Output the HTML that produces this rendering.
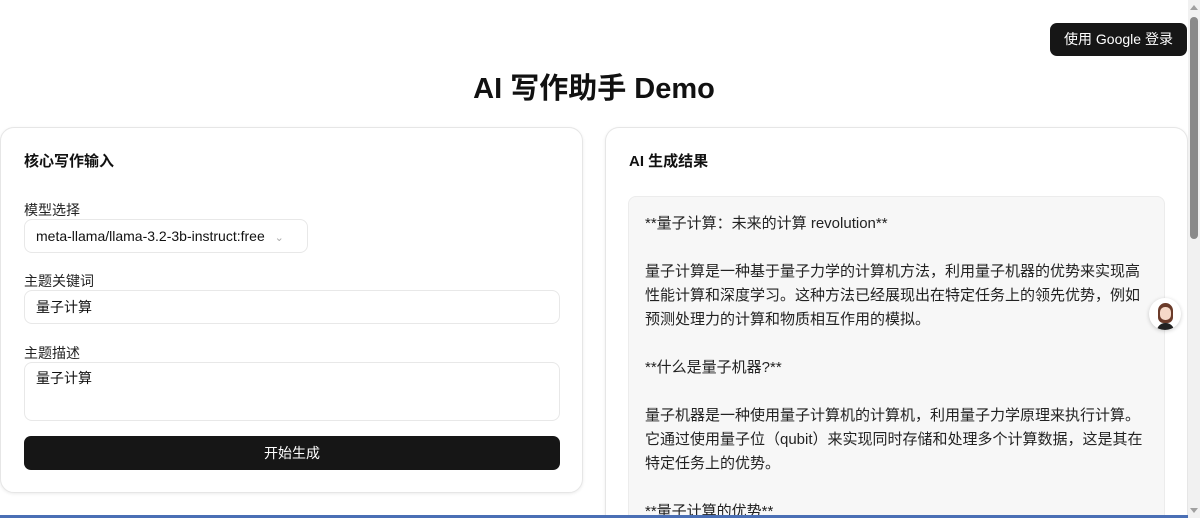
<!DOCTYPE html>
<html style="overflow:hidden;height:518px"><head><meta charset="utf-8"><style>
*{box-sizing:border-box;margin:0;padding:0}
body{width:1200px;height:518px;overflow:hidden;background:#fff;font-family:"Liberation Sans","Noto Sans CJK SC",sans-serif;color:#111;position:relative}
.btn-g{position:absolute;left:1050px;top:23px;width:137px;height:33px;background:#161616;color:#fff;border-radius:7px;font-size:14px;line-height:33px;text-align:center}
h1{position:absolute;left:0;width:1188px;top:70px;text-align:center;font-size:29px;font-weight:bold;line-height:38px}
.card{position:absolute;top:127px;border:1px solid #e6e6e6;border-radius:14px;background:#fff;box-shadow:0 1px 3px rgba(0,0,0,.08)}
.l{left:0;width:583px;height:366px}
.r{left:605px;width:583px;height:391px;overflow:hidden;border-bottom:none;border-radius:14px 14px 0 0}
.ct{position:absolute;left:23px;top:22px;font-size:15px;font-weight:bold}
.lab{position:absolute;left:23px;font-size:14px;color:#222}
.in{position:absolute;left:23px;border:1px solid #e8e8e8;border-radius:8px;font-size:14px;padding-left:11px;background:#fff}
.go{position:absolute;left:23px;top:308px;width:536px;height:34px;background:#161616;border-radius:7px;color:#fff;font-size:14px;text-align:center;line-height:34px}
.out{position:absolute;left:22px;top:68px;width:537px;height:323px;overflow:hidden;background:#f7f7f7;border:1px solid #ececec;border-bottom:none;border-radius:8px 8px 0 0;padding:15px 16px;font-size:15px;line-height:24px;color:#222}
.out p{margin-bottom:24px}
.sb{position:absolute;left:1188px;top:0;width:12px;height:518px;background:#f1f1f1}
.th{position:absolute;left:2px;top:17px;width:8px;height:222px;background:#8a8a8a;border-radius:4px}
.bl{position:absolute;left:0;top:515px;width:1188px;height:3px;background:#4a6fb5}
.ar{position:absolute;left:2px;width:0;height:0;border-left:4px solid transparent;border-right:4px solid transparent}
</style></head><body>
<div class="btn-g">使用 Google 登录</div>
<h1>AI 写作助手 Demo</h1>
<div class="card l">
<div class="ct">核心写作输入</div>
<div class="lab" style="top:72px">模型选择</div>
<div class="in" style="top:91px;width:284px;height:34px;line-height:32px">meta-llama/llama-3.2-3b-instruct:free <span style="color:#aaa;font-size:11px;margin-left:6px">&#8964;</span></div>
<div class="lab" style="top:143px">主题关键词</div>
<div class="in" style="top:162px;width:536px;height:34px;line-height:32px">量子计算</div>
<div class="lab" style="top:215px">主题描述</div>
<div class="in" style="top:234px;width:536px;height:59px;line-height:30px">量子计算</div>
<div class="go">开始生成</div>
</div>
<div class="card r">
<div class="ct">AI 生成结果</div>
<div class="out">
<p>**量子计算：未来的计算 revolution**</p>
<p>量子计算是一种基于量子力学的计算机方法，利用量子机器的优势来实现高性能计算和深度学习。这种方法已经展现出在特定任务上的领先优势，例如预测处理力的计算和物质相互作用的模拟。</p>
<p>**什么是量子机器?**</p>
<p>量子机器是一种使用量子计算机的计算机，利用量子力学原理来执行计算。它通过使用量子位（qubit）来实现同时存储和处理多个计算数据，这是其在特定任务上的优势。</p>
<p>**量子计算的优势**</p>
</div>
</div>
<div style="position:absolute;left:1149px;top:298px;width:32px;height:32px;border-radius:50%;background:#fff;box-shadow:0 1px 4px rgba(0,0,0,.2);overflow:hidden">
<div style="position:absolute;left:9px;top:5px;width:15px;height:20px;border-radius:8px 8px 6px 6px;background:#6b3b2a"></div>
<div style="position:absolute;left:11px;top:9px;width:11px;height:13px;border-radius:5px;background:#f5d9c8"></div>
<div style="position:absolute;left:8px;top:25px;width:17px;height:8px;border-radius:8px 8px 0 0;background:#222"></div>
</div>
<div class="sb"><div class="ar" style="top:5px;border-bottom:5px solid #a0a0a0"></div><div class="th"></div><div class="ar" style="top:508px;border-top:5px solid #a0a0a0"></div></div>
<div class="bl"></div>
</body></html>
